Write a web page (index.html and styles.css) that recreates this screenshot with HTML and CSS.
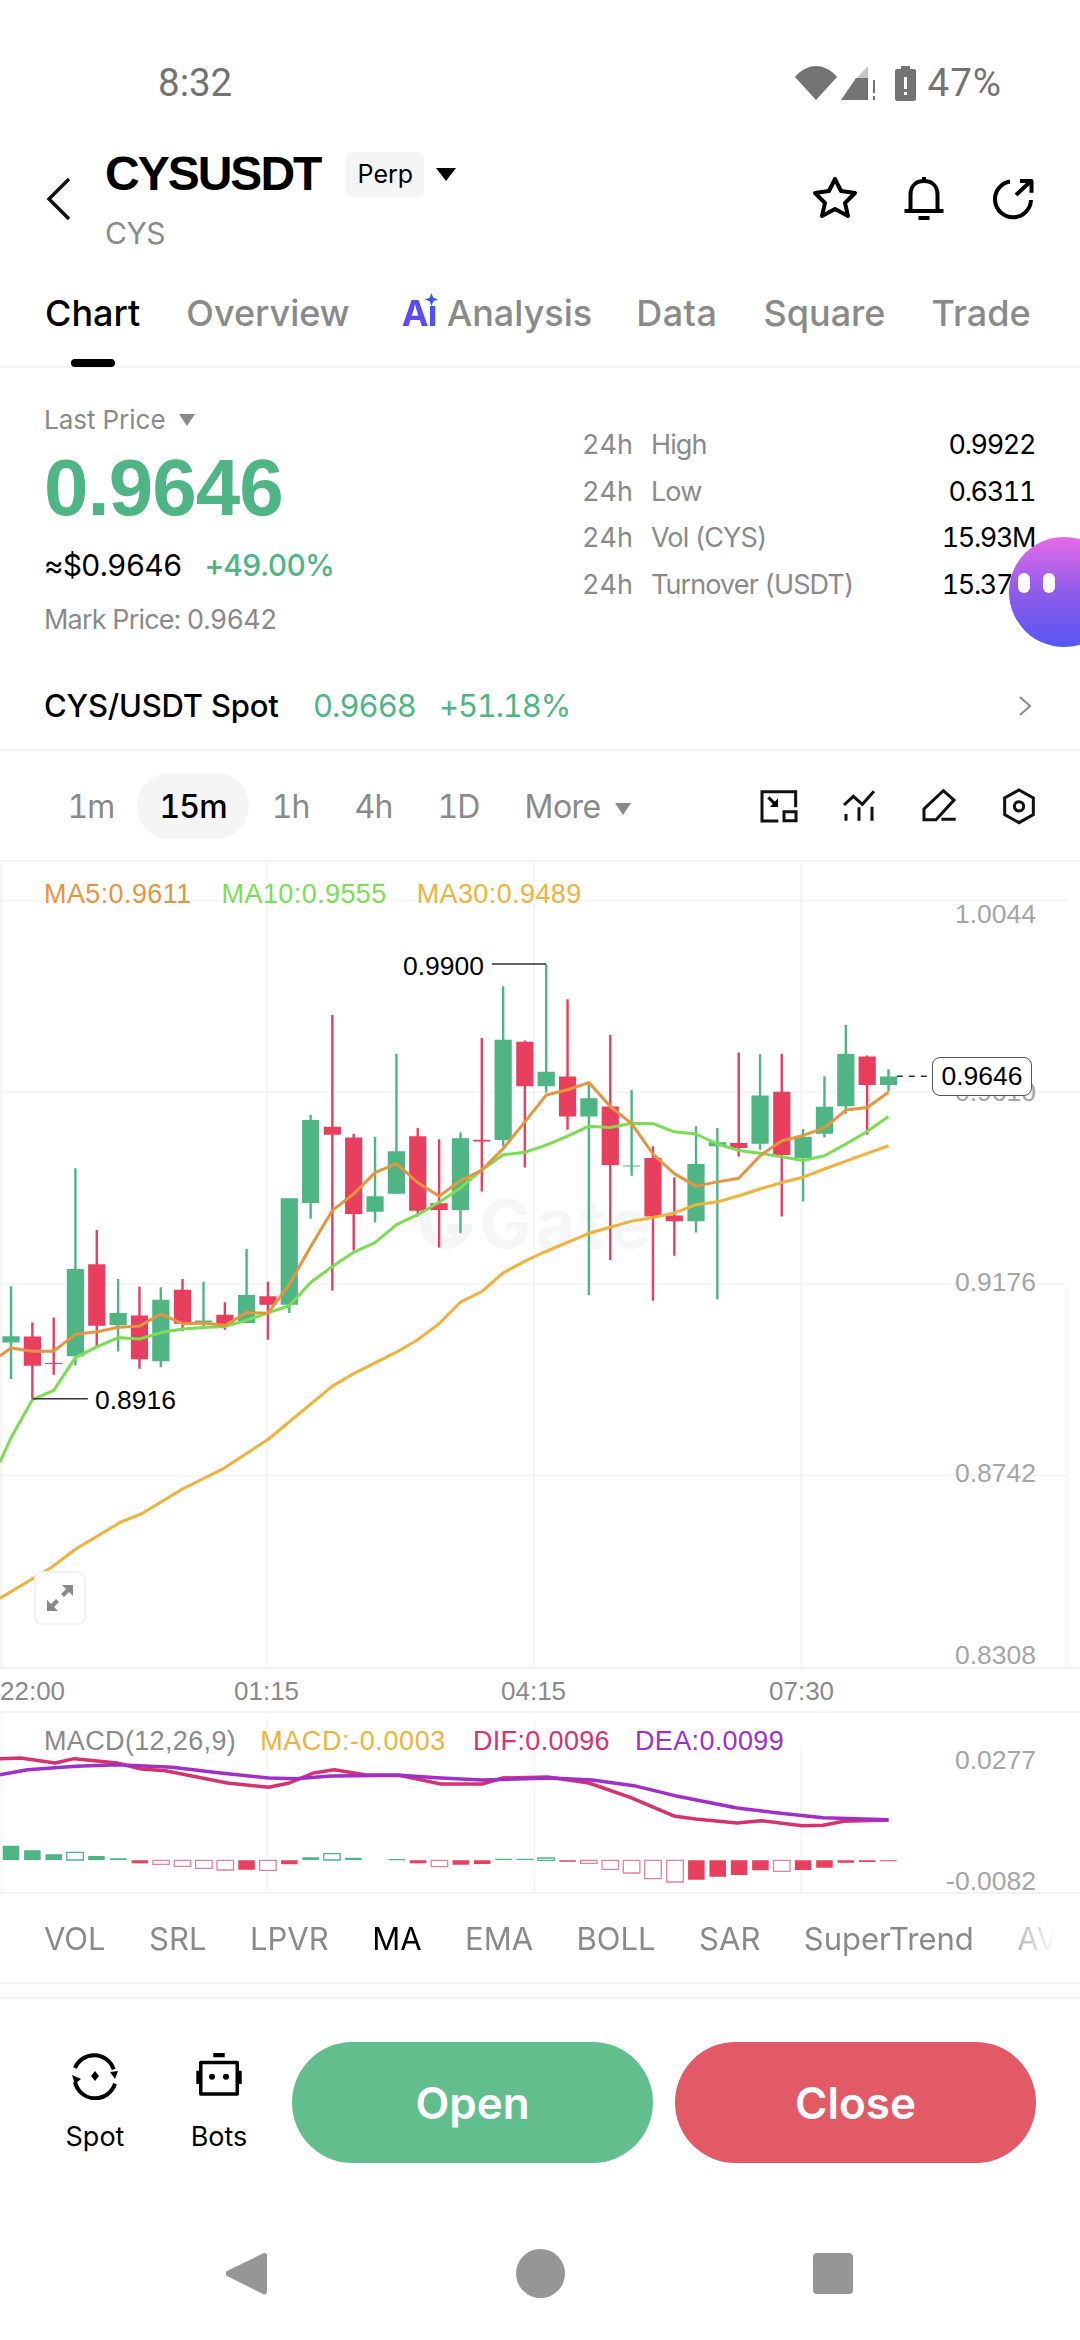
FILE: index.html
```html
<!DOCTYPE html>
<html lang="en">
<head>
<meta charset="utf-8">
<title>CYSUSDT Perp</title>
<link rel="stylesheet" href="styles.css">
</head>
<body>
<div class="page">
  <div class="status">
    <span class="clock">8:32</span>
    <div class="status-right">
      <svg class="s-wifi" viewBox="0 0 42 34"><path d="M0 11C6 4 13 0 21 0s15 4 21 11L21 34z"/></svg>
      <svg class="s-signal" viewBox="0 0 34 34"><path class="dim" d="M27 0v14H14z"/><path d="M27 12v22H0L15 12z"/><path d="M32 14h2v13h-2zM32 30h2v4h-2z"/></svg>
      <svg class="s-batt" viewBox="0 0 21 35"><path fill-rule="evenodd" d="M6 0h9v3h4a2 2 0 0 1 2 2v28a2 2 0 0 1-2 2H2a2 2 0 0 1-2-2V5a2 2 0 0 1 2-2h4zM9 11v12h3V11zM9 26v3h3v-3z"/></svg>
      <span class="pct">47%</span>
    </div>
  </div>

  <header class="head">
    <svg class="back" viewBox="0 0 28 46"><path d="M25 3 5 23l20 20"/></svg>
    <div class="title-block">
      <div class="title-row">
        <h1 class="title">CYSUSDT</h1>
        <span class="chip">Perp</span>
        <span class="tri tri-black"></span>
      </div>
      <div class="sub">CYS</div>
    </div>
    <div class="head-actions">
      <svg class="hicon" viewBox="0 0 48 48"><path d="M24 5l6 12 14 2-10 10 3 13-13-7-13 7 3-13L4 19l14-2z"/></svg>
      <svg class="hicon" viewBox="0 0 48 48"><path d="M10.5 37V21C10.500 12 16 7 24 7s13.500 5 13.500 14v16M4.500 37h39M24 3v4"/><path class="solid" d="M18.500 42h11v4h-11z"/></svg>
      <svg class="hicon" viewBox="0 0 48 48"><path d="M21 7.500A18 18 0 1 0 42 26M27 21 42 7M31 7h11.500v11.700"/></svg>
    </div>
  </header>

  <nav class="tabs">
    <span class="tab tab-on">Chart</span>
    <span class="tab">Overview</span>
    <span class="tab tab-ai"><span class="ai-mark">Ai<svg class="ai-star" viewBox="0 0 14 14"><path d="M7 0 9 5l5 2-5 2-2 5-2-5-5-2 5-2z"/></svg></span>Analysis</span>
    <span class="tab tab-data">Data</span>
    <span class="tab">Square</span>
    <span class="tab">Trade</span>
    <span class="tab-bar"></span>
  </nav>

  <section class="stats">
    <div class="stats-left">
      <div class="last-label">Last Price <span class="tri tri-gray"></span></div>
      <div class="big-price">0.9646</div>
      <div class="usd-row"><span class="usd">≈$0.9646</span><span class="chg">+49.00%</span></div>
      <div class="mark">Mark Price: 0.9642</div>
    </div>
    <div class="stats-right">
      <div class="stat"><span class="s24">24h</span><span class="sname">High</span><span class="sval">0.9922</span></div>
      <div class="stat"><span class="s24">24h</span><span class="sname">Low</span><span class="sval">0.6311</span></div>
      <div class="stat"><span class="s24">24h</span><span class="sname">Vol (CYS)</span><span class="sval">15.93M</span></div>
      <div class="stat"><span class="s24">24h</span><span class="sname">Turnover (USDT)</span><span class="sval">15.37M</span></div>
    </div>
    <div class="float-btn"><span></span><span></span></div>
  </section>

  <div class="spot-row">
    <span class="spot-name">CYS/USDT Spot</span>
    <span class="spot-price">0.9668</span>
    <span class="spot-chg">+51.18%</span>
    <svg class="spot-chev" viewBox="0 0 14 20"><path d="M2 1l10 9-10 9"/></svg>
  </div>

  <div class="tf-row">
    <div class="tf-list">
      <span class="tf">1m</span>
      <span class="tf tf-on">15m</span>
      <span class="tf">1h</span>
      <span class="tf">4h</span>
      <span class="tf">1D</span>
      <span class="tf tf-more">More <span class="tri tri-gray"></span></span>
    </div>
    <div class="tf-icons">
      <svg class="ticon" viewBox="57 51 120 120"><path d="M167 115V68H66v88h49"/><path d="M132 128h36v27h-36zM85 85l25 25"/><path class="solid" d="M114 88v26H90z"/></svg>
      <svg class="ticon" viewBox="297 51 120 120"><path d="M312 108l28-26 27 24 35-39M318 135v20M357 115v40M396 113v42"/></svg>
      <svg class="ticon" viewBox="537 51 120 120"><path d="M610 65l32 28-54 59h-36v-32zM604 151h43"/></svg>
      <svg class="ticon" viewBox="777 51 120 120"><path d="M837 63l43 24v50l-43 24-43-24V87z"/><circle cx="837" cy="112" r="14"/></svg>
    </div>
  </div>

  <section class="chart">
    <div class="watermark"><svg class="wm-logo" viewBox="0 0 50 50"><path d="M38 9a20 20 0 1 0 6 22H26"/></svg><span>Gate</span></div>
    <svg class="chart-svg" viewBox="0 -47.600 3136 2254" preserveAspectRatio="none">
      <path class="grid" d="M775 -47V2206M1551 -47V2206M2326 -47V2206M3 -47V2206M3100 1133V2206M0 60H3100M0 597H3136M0 1133H3100M0 1670H3100"/>
      <path class="up" d="M28.500 1140h7v260h-7zM7 1280h50v18h-50zM215.500 810h7v552h-7zM194 1092h50v244h-50zM339.500 1120h7v203h-7zM318 1215h50v34h-50zM463.500 1143h7v224h-7zM442 1178h50v172h-50zM587.500 1128h7v124h-7zM566 1236h50v5h-50zM712.500 1036h7v207h-7zM691 1165h50v78h-50zM836.500 1190h7v25h-7zM815 894h50v298h-50zM898.500 661h7v290h-7zM877 675h50v232h-50zM1085.500 722h7v240h-7zM1064 888h50v44h-50zM1147.500 489h7v393h-7zM1126 762h50v119h-50zM1333.500 709h7v283h-7zM1312 726h50v201h-50zM1457.500 300h7v448h-7zM1436 450h50v281h-50zM1582.500 239h7v359h-7zM1561 540h50v40h-50zM1706.500 570h7v595h-7zM1685 614h50v51h-50zM1830.500 591h7v240h-7zM1809 802h50v3h-50zM2017.500 692h7v298h-7zM1996 798h50v160h-50zM2079.500 697h7v480h-7zM2058 737h50v11h-50zM2203.500 491h7v267h-7zM2182 606h50v135h-50zM2328.500 700h7v203h-7zM2307 722h50v59h-50zM2390.500 552h7v172h-7zM2369 638h50v75h-50zM2452.500 409h7v248h-7zM2431 490h50v146h-50zM2576.500 533h7v62h-7zM2555 553h50v24h-50z"/>
      <path class="dn" d="M90.500 1242h7v213h-7zM69 1281h50v82h-50zM152.500 1228h7v160h-7zM131 1355h50v3h-50zM277.500 983h7v327h-7zM256 1079h50v172h-50zM401.500 1142h7v229h-7zM380 1222h50v123h-50zM526.500 1120h7v145h-7zM505 1150h50v95h-50zM649.500 1185h7v77h-7zM628 1220h50v27h-50zM774.500 1128h7v162h-7zM753 1168h50v24h-50zM961.500 381h7v772h-7zM940 694h50v22h-50zM1023.500 713h7v327h-7zM1002 724h50v214h-50zM1209.500 697h7v248h-7zM1188 720h50v209h-50zM1271.500 729h7v303h-7zM1250 908h50v19h-50zM1395.500 445h7v430h-7zM1374 730h50v5h-50zM1520.500 452h7v356h-7zM1499 456h50v124h-50zM1644.500 337h7v365h-7zM1623 553h50v112h-50zM1768.500 437h7v630h-7zM1747 637h50v164h-50zM1892.500 748h7v433h-7zM1871 781h50v164h-50zM1954.500 836h7v219h-7zM1933 942h50v16h-50zM2141.500 486h7v291h-7zM2120 739h50v14h-50zM2266.500 489h7v456h-7zM2514.500 494h7v222h-7zM2245 596h50v177h-50zM2493 497h50v80h-50z"/>
      <polyline class="ln ma30" points="0,2014 150,1927 220,1876 350,1801 410,1778 530,1708 650,1650 780,1568 965,1420 1027,1385 1089,1355 1151,1325 1213,1290 1275,1245 1337,1185 1399,1155 1461,1103 1524,1070 1568,1050 1710,992 1772,975 1834,958 1896,948 1958,935 2021,912 2083,904 2145,887 2207,868 2270,850 2332,835 2394,812 2456,790 2518,768 2580,747"/>
      <polyline class="ln ma10" points="0,1633 30,1568 94,1458 156,1432 219,1340 281,1310 343,1284 405,1288 467,1270 530,1260 591,1256 653,1253 716,1235 778,1215 840,1195 902,1130 965,1085 1027,1045 1089,1018 1151,968 1213,940 1275,905 1337,865 1399,815 1461,772 1524,765 1586,745 1648,720 1710,692 1772,696 1834,684 1896,685 1958,708 2021,714 2083,742 2145,760 2207,768 2270,778 2332,788 2394,775 2456,742 2518,707 2580,665"/>
      <polyline class="ln ma5" points="0,1335 32,1313 94,1322 156,1322 219,1275 281,1268 343,1255 405,1252 467,1218 530,1245 591,1243 653,1250 716,1214 778,1216 840,1135 902,1030 965,928 1027,882 1089,822 1151,797 1213,850 1275,888 1337,845 1399,815 1461,755 1524,680 1586,605 1648,590 1710,570 1772,637 1834,685 1896,770 1958,825 2021,860 2083,848 2145,838 2207,775 2270,733 2332,718 2394,697 2456,647 2518,640 2580,597"/>
      <path class="leader" d="M1428 238H1586M94 1455H255"/>
      <path class="dash" d="M2604 552H2698"/>
    </svg>
    <div class="ma-legend">
      <span class="c-ma5">MA5:0.9611</span>
      <span class="c-ma10">MA10:0.9555</span>
      <span class="c-ma30">MA30:0.9489</span>
    </div>
    <span class="axis a1">1.0044</span>
    <span class="axis a2">0.9610</span>
    <span class="axis a3">0.9176</span>
    <span class="axis a4">0.8742</span>
    <span class="axis a5">0.8308</span>
    <span class="hl hl-high">0.9900</span>
    <span class="hl hl-low">0.8916</span>
    <span class="now">0.9646</span>
    <div class="expand">
      <svg viewBox="0 0 26 26"><path d="M26 0v11l-4-4-5 5-3-3 5-5-4-4zM0 26V15l4 4 5-5 3 3-5 5 4 4z"/></svg>
    </div>
  </section>

  <div class="times">
    <span class="t0">22:00</span>
    <span class="t1">01:15</span>
    <span class="t2">04:15</span>
    <span class="t3">07:30</span>
  </div>

  <section class="macd">
    <svg class="macd-svg" viewBox="0 825 1568 540" preserveAspectRatio="none">
      <path class="grid" d="M388 840V1365M776 840V1365M1163 925V1365M2 825V1365"/>
      <path class="bar-up" d="M4 1223h24v43h-24zM35 1237h24v29h-24zM66 1249h24v17h-24zM128 1254h24v12h-24zM160 1261h24v5h-24zM439 1258h24v8h-24zM501 1259h24v7h-24zM564 1263h24v4h-24zM719 1262h24v4h-24zM750 1262h24v4h-24z"/>
      <path class="bar-up-o" d="M97 1243h24v23h-24zM470 1247h24v19h-24zM781 1260h24v7h-24z"/>
      <path class="bar-dn" d="M191 1267h24v9h-24zM346 1267h24v28h-24zM408 1267h24v12h-24zM595 1267h24v9h-24zM657 1267h24v13h-24zM688 1267h24v11h-24zM812 1267h24v4h-24zM999 1267h24v58h-24zM1030 1267h24v49h-24zM1061 1267h24v44h-24zM1092 1267h24v30h-24zM1154 1267h24v29h-24zM1185 1267h24v22h-24zM1216 1267h24v7h-24zM1247 1267h24v5h-24zM1278 1267h24v3h-24z"/>
      <path class="bar-dn-o" d="M222 1267h24v12h-24zM253 1267h24v18h-24zM284 1267h24v24h-24zM315 1267h24v29h-24zM377 1267h24v30h-24zM626 1267h24v19h-24zM843 1267h24v9h-24zM874 1267h24v27h-24zM905 1267h24v38h-24zM936 1267h24v55h-24zM968 1267h24v65h-24zM1123 1267h24v33h-24z"/>
      <polyline class="ln mline dif" points="0,962 30,960 80,975 108,962 170,975 205,993 240,998 330,1035 390,1048 420,1035 455,1005 485,995 530,1010 580,1012 640,1038 700,1038 730,1020 795,1017 855,1035 915,1078 980,1135 1010,1143 1070,1155 1105,1148 1165,1163 1195,1162 1225,1150 1290,1146"/>
      <polyline class="ln mline dea" points="0,1010 40,995 110,985 170,980 250,988 320,1005 390,1020 430,1022 480,1014 580,1012 640,1020 700,1026 800,1020 860,1026 920,1043 980,1073 1070,1110 1130,1125 1195,1139 1290,1145"/>
    </svg>
    <div class="macd-legend">
      <span class="c-gray">MACD(12,26,9)</span>
      <span class="c-macd">MACD:-0.0003</span>
      <span class="c-dif">DIF:0.0096</span>
      <span class="c-dea">DEA:0.0099</span>
    </div>
    <span class="axis m1">0.0277</span>
    <span class="axis m2">-0.0082</span>
  </section>

  <div class="indicators">
    <span>VOL</span>
    <span>SRL</span>
    <span>LPVR</span>
    <span class="ind-on">MA</span>
    <span>EMA</span>
    <span>BOLL</span>
    <span>SAR</span>
    <span>SuperTrend</span>
    <span>AVL</span>
  </div>
  <div class="band"></div>

  <div class="actions">
    <div class="mini mini-spot">
      <svg class="mini-icon" viewBox="0 0 48 48"><path d="M4 16A20.700 20.700 0 0 1 42.700 17.300M44 31.700A20.700 20.700 0 0 1 4 30"/><path class="solid" d="M24 19l4 5-4 5-4-5zM39 20l8-1-3 8zM1 23l9 4-6 5z"/></svg>
      <span>Spot</span>
    </div>
    <div class="mini mini-bots">
      <svg class="mini-icon mini-bot" viewBox="0 0 48 48"><path d="M5.750 10.400h36.500v31.500H5.750z"/><path class="solid" d="M18.300 1h11.400v4.300H18.300zM1.300 18.700H4V32H1.300zM44 18.700h2.700V32H44z"/><circle class="solid" cx="17" cy="24.700" r="3"/><circle class="solid" cx="31" cy="24.700" r="3"/></svg>
      <span>Bots</span>
    </div>
    <button class="cta cta-open">Open</button>
    <button class="cta cta-close">Close</button>
  </div>

  <div class="navbar">
    <svg class="nav-back" viewBox="0 0 41 45"><path d="M38 2a2.500 2.500 0 0 1 3 2v37a2.500 2.500 0 0 1-4 2L1 25a3 3 0 0 1 0-5z"/></svg>
    <span class="nav-home"></span>
    <span class="nav-square"></span>
  </div>
</div>
</body>
</html>
```
FILE: styles.css
```css
* { box-sizing: border-box; margin: 0; padding: 0; }
html, body { background: #fff; }
body { font-family: Inter, "Liberation Sans", sans-serif; color: #000; font-variant-numeric: tabular-nums; }
.page { width: 1080px; height: 2340px; overflow: hidden; position: relative; }

.status { height: 125px; padding: 62px 78px 0 158px; display: flex; justify-content: space-between; align-items: flex-start; font-family: Roboto, sans-serif; font-size: 38.500px; line-height: 42px; color: #737373; }
.status-right { display: flex; align-items: center; }
.pct { letter-spacing: 1px; }
.s-wifi { width: 42px; height: 34px; fill: #737373; margin-right: 4px; }
.s-signal { width: 34px; height: 34px; fill: #737373; margin-right: 20px; }
.s-signal .dim { fill: #c4c4c4; }
.s-batt { width: 21px; height: 35px; fill: #737373; margin-right: 12px; }

.head { height: 150px; display: flex; align-items: flex-start; padding: 24px 43px 0 44px; position: relative; }
.back { width: 28px; height: 46px; margin: 27px 33px 0 0; fill: none; stroke: #111; stroke-width: 3.500; }
.title-block { flex: 1; }
.title-row { display: flex; align-items: center; height: 50px; }
.title { font-family: "Liberation Sans", Arial, sans-serif; font-size: 48px; font-weight: 700; letter-spacing: -2px; line-height: 50px; }
.chip { width: 78px; height: 45px; margin-left: 26px; background: #f5f5f5; border-radius: 6px; font-size: 25px; display: flex; align-items: center; justify-content: center; }
.tri { display: inline-block; width: 0; height: 0; border-left-style: solid; border-right-style: solid; border-top-style: solid; border-left-color: transparent; border-right-color: transparent; }
.tri-black { border-width: 13px 10px 0; border-top-color: #000; margin-left: 12px; }
.tri-gray { border-width: 12px 8.500px 0; border-top-color: #8a8a8a; vertical-align: 3px; margin-left: 6px; }
.sub { font-size: 30px; line-height: 36px; color: #8a8a8a; margin-top: 16px; letter-spacing: -.5px; }
.head-actions { display: flex; gap: 41px; margin-top: 25px; }
.hicon { width: 48px; height: 48px; fill: none; stroke: #000; stroke-width: 4; stroke-linejoin: round; }
.hicon .solid { fill: #000; stroke: none; }
.solid { fill: #000; stroke: none; }

.tabs { height: 93px; border-bottom: 2px solid #f3f3f3; display: flex; gap: 46px; padding: 13px 0 0 45px; position: relative; font-size: 36px; line-height: 50px; font-weight: 500; color: #8a8a8a; white-space: nowrap; }
.tab-on { color: #000; }
.tab-ai { margin-left: 6px; margin-right: -2px; display: flex; }
.tab-data { letter-spacing: .5px; }
.ai-mark { position: relative; font-weight: 700; width: 45px; letter-spacing: -1px; background: linear-gradient(60deg, #7d3cf0, #3a5cf5); -webkit-background-clip: text; background-clip: text; color: transparent; }
.ai-star { position: absolute; left: 23px; top: 5px; width: 13px; height: 13px; fill: #2f5cf0; background: #fff; border-radius: 7px; }
.tab-bar { position: absolute; left: 71px; top: 84px; width: 44px; height: 8px; background: #000; border-radius: 4px; }

.stats { height: 270px; display: flex; padding: 36px 0 0 44px; position: relative; }
.stats-left { width: 538px; }
.last-label { font-size: 26px; line-height: 32px; color: #8a8a8a; }
.big-price { font-family: "Liberation Sans", Arial, sans-serif; font-size: 80px; line-height: 80px; font-weight: 700; color: #4fb585; letter-spacing: -1px; margin-top: 12px; }
.usd-row { display: flex; gap: 23px; margin-top: 17px; line-height: 40px; font-size: 30px; }
.usd { letter-spacing: -.8px; }
.chg { color: #4fb585; font-weight: 500; letter-spacing: -.8px; }
.mark { font-size: 27px; line-height: 36px; color: #8a8a8a; margin-top: 17px; letter-spacing: -.8px; }
.stats-right { width: 453px; padding-top: 18px; font-size: 27px; line-height: 46.700px; color: #8a8a8a; }
.stat { display: flex; }
.s24 { width: 69px; }
.sname { flex: 1; letter-spacing: -.9px; }
.sval { color: #000; letter-spacing: -1.400px; }
.float-btn { position: absolute; left: 1009px; top: 169px; width: 110px; height: 110px; border-radius: 50%; background: linear-gradient(180deg, #e56ae8 0%, #8f5ce9 50%, #5557f5 100%); display: flex; gap: 13px; padding: 36px 0 0 9px; }
.float-btn span { width: 12px; height: 20px; background: #fff; border-radius: 6px; }

.spot-row { height: 113px; padding: 24px 48px 0 44px; border-bottom: 2px solid #f3f3f3; display: flex; align-items: center; font-size: 31px; color: #4fb585; }
.spot-name { color: #000; font-weight: 500; font-size: 31px; letter-spacing: -.2px; width: 269px; }
.spot-price { width: 126px; letter-spacing: -1px; }
.spot-chg { flex: 1; letter-spacing: -1.200px; }
.spot-chev { width: 14px; height: 20px; fill: none; stroke: #8a8a8a; stroke-width: 2; }

.tf-row { height: 111px; border-bottom: 2px solid #f3f3f3; display: flex; justify-content: space-between; align-items: center; padding: 0 41px 0 45px; }
.tf-list { display: flex; font-size: 32px; letter-spacing: -.9px; color: #8a8a8a; }
.tf { height: 66px; line-height: 68px; padding: 0 22.500px; }
.tf-on { background: #f5f5f5; border-radius: 33px; color: #000; font-weight: 500; }
.tf-more { letter-spacing: -.5px; }
.tf-icons { display: flex; gap: 40px; }
.ticon { width: 40px; height: 40px; fill: none; stroke: #111; stroke-width: 9; }

.chart { height: 805px; position: relative; font-family: "Liberation Sans", Arial, sans-serif; font-size: 26.500px; }
.chart-svg { position: absolute; left: 0; top: 0; width: 1080px; height: 805px; overflow: hidden; }
.grid { fill: none; stroke: #f3f3f3; stroke-width: 1.500px; vector-effect: non-scaling-stroke; }
.up { fill: #4fb585; }
.dn { fill: #e83f5f; }
.ln { fill: none; stroke-width: 3px; vector-effect: non-scaling-stroke; stroke-linejoin: round; }
.mline { stroke-width: 3.500px; }
.ma5 { stroke: #e5953f; }
.ma10 { stroke: #7ade53; }
.ma30 { stroke: #f0b23c; }
.leader { fill: none; stroke: #333; stroke-width: 1.500px; vector-effect: non-scaling-stroke; }
.dash { fill: none; stroke: #333; stroke-width: 1.500px; stroke-dasharray: 6 6; vector-effect: non-scaling-stroke; }
.ma-legend { position: absolute; left: 44px; top: 16px; font-size: 27px; letter-spacing: .4px; line-height: 32px; display: flex; gap: 30px; }
.c-ma5 { color: #e5953f; }
.c-ma10 { color: #7ade53; }
.c-ma30 { color: #f0b23c; }
.axis { position: absolute; right: 44px; line-height: 30px; color: #a5a5a5; font-family: "Liberation Sans", Arial, sans-serif; font-size: 26.500px; }
.a1 { top: 37px; }
.a2 { top: 215px; }
.a3 { top: 405px; }
.a4 { top: 596px; }
.a5 { top: 778px; }
.hl { position: absolute; line-height: 30px; color: #000; }
.hl-high { left: 403px; top: 89px; }
.hl-low { left: 95px; top: 523px; }
.now { position: absolute; left: 932px; top: 195px; width: 100px; height: 39px; line-height: 37px; text-align: center; background: #fff; border: 1.500px solid #555; border-radius: 8px; color: #000; }
.expand { position: absolute; left: 34px; top: 709px; width: 52px; height: 54px; background: #fff; border: 2px solid #f1f1f1; border-radius: 8px; display: flex; align-items: center; justify-content: center; }
.expand svg { width: 26px; height: 26px; fill: #8a8a8a; }
.watermark { position: absolute; left: 420px; top: 335px; display: flex; align-items: center; gap: 8px; font-family: Inter, sans-serif; font-weight: 700; font-size: 68px; letter-spacing: 5px; line-height: 50px; color: #f5f6f7; }
.wm-logo { width: 52px; height: 52px; fill: none; stroke: #f3f5f7; stroke-width: 11; }

.times { height: 46px; border-top: 2px solid #f3f3f3; border-bottom: 2px solid #f3f3f3; position: relative; font-family: "Liberation Sans", Arial, sans-serif; font-size: 26px; color: #8a8a8a; line-height: 44px; }
.times span { position: absolute; top: 0; }
.t0 { left: 0; }
.t1 { left: 234px; }
.t2 { left: 501px; }
.t3 { left: 769px; }

.macd { height: 181px; position: relative; border-bottom: 2px solid #f3f3f3; font-family: "Liberation Sans", Arial, sans-serif; font-size: 27px; }
.macd-svg { position: absolute; left: 0; top: 0; width: 1080px; height: 180px; }
.macd-legend { position: absolute; left: 44px; top: 12px; line-height: 32px; letter-spacing: .35px; display: flex; gap: 27px; }
.c-gray { color: #8a8a8a; }
.c-macd { color: #f0b23c; margin-left: -3px; letter-spacing: .6px; }
.c-dif { color: #d6326f; }
.c-dea { color: #a02fc9; margin-left: -2px; }
.m1 { top: 32px; }
.m2 { top: 153px; }
.bar-up { fill: #4fb585; }
.bar-dn { fill: #e83f5f; }
.bar-up-o { fill: #fff; stroke: #4fb585; stroke-width: 1.300px; vector-effect: non-scaling-stroke; }
.bar-dn-o { fill: #fff; stroke: #e8809a; stroke-width: 1.300px; vector-effect: non-scaling-stroke; }
.dif { stroke: #d6326f; }
.dea { stroke: #a02fc9; }

.indicators { height: 88px; display: flex; gap: 43.500px; padding-left: 44px; align-items: center; font-size: 31px; color: #8a8a8a; white-space: nowrap; overflow: hidden; width: 1056px; -webkit-mask-image: linear-gradient(90deg, #000 94%, transparent 100%); mask-image: linear-gradient(90deg, #000 94%, transparent 100%); }
.ind-on { color: #000; }
.band { height: 17px; border-top: 2px solid #f4f4f4; border-bottom: 2px solid #f4f4f4; background: #fdfdfd; }

.actions { height: 200px; display: flex; align-items: flex-start; padding-top: 43px; position: relative; }
.mini { display: flex; flex-direction: column; align-items: center; font-size: 27px; line-height: 34px; }
.mini-icon { width: 48px; height: 48px; fill: none; stroke: #000; stroke-width: 4; margin-top: 10px; margin-bottom: 20px; }
.mini-bot { stroke-width: 3.500; stroke-linejoin: round; }
.mini-spot { width: 60px; margin-left: 65px; }
.mini-bots { width: 60px; margin-left: 64px; margin-right: 43px; }
.cta { width: 361px; height: 121px; border: 0; border-radius: 60.500px; font-family: Inter, sans-serif; font-size: 44px; font-weight: 600; color: #fff; }
.cta-open { background: #62bf8d; margin-right: 22px; }
.cta-close { background: #e15a66; }

.navbar { height: 140px; position: relative; }
.navbar > * { position: absolute; }
.nav-back { left: 226px; top: 52px; width: 41px; height: 45px; fill: #969696; }
.nav-home { left: 516px; top: 50px; width: 49px; height: 49px; border-radius: 50%; background: #969696; }
.nav-square { left: 813px; top: 54px; width: 40px; height: 41px; border-radius: 4px; background: #969696; }
```
